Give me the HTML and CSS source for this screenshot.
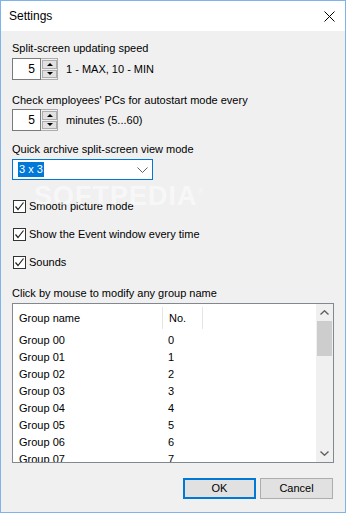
FILE: index.html
```html
<!DOCTYPE html>
<html lang="en">
<head>
<meta charset="UTF-8">
<title>Settings</title>
<link rel="stylesheet" href="styles.css">
</head>
<body>
<div class="window">
    <div class="titlebar">
        <span class="title">Settings</span>
        <svg class="close" width="11" height="11" viewBox="0 0 11 11">
            <path d="M0.5 0.5 L10.5 10.5 M10.5 0.5 L0.5 10.5" stroke="#000" stroke-width="1" fill="none"/>
        </svg>
    </div>

    <div class="content">
        <div class="label first">Split-screen updating speed</div>
        <div class="spin-row">
            <div class="spin">
                <div class="spin-value">5</div>
                <div class="spin-buttons">
                    <div class="spin-btn"><span class="arrow-up"></span></div>
                    <div class="spin-btn"><span class="arrow-down"></span></div>
                </div>
            </div>
            <span class="spin-note">1 - MAX, 10 - MIN</span>
        </div>

        <div class="label">Check employees' PCs for autostart mode every</div>
        <div class="spin-row tight">
            <div class="spin">
                <div class="spin-value">5</div>
                <div class="spin-buttons">
                    <div class="spin-btn"><span class="arrow-up"></span></div>
                    <div class="spin-btn"><span class="arrow-down"></span></div>
                </div>
            </div>
            <span class="spin-note">minutes (5...60)</span>
        </div>

        <div class="label archive">Quick archive split-screen view mode</div>
        <div class="combo">
            <span class="combo-value">3 x 3</span>
            <svg width="11" height="6" viewBox="0 0 11 6">
                <path d="M0.5 0.5 L5.5 5.5 L10.5 0.5" stroke="#606060" stroke-width="1" fill="none"/>
            </svg>
        </div>

        <div class="checks">
            <label class="check"><span class="box">
                <svg width="11" height="11" viewBox="0 0 11 11"><path d="M1.5 5.5 L4 8.5 L9.5 1.5" stroke="#222" stroke-width="1.2" fill="none"/></svg>
            </span>Smooth picture mode</label>
            <label class="check"><span class="box">
                <svg width="11" height="11" viewBox="0 0 11 11"><path d="M1.5 5.5 L4 8.5 L9.5 1.5" stroke="#222" stroke-width="1.2" fill="none"/></svg>
            </span>Show the Event window every time</label>
            <label class="check"><span class="box">
                <svg width="11" height="11" viewBox="0 0 11 11"><path d="M1.5 5.5 L4 8.5 L9.5 1.5" stroke="#222" stroke-width="1.2" fill="none"/></svg>
            </span>Sounds</label>
        </div>

        <div class="label groups">Click by mouse to modify any group name</div>
        <div class="list">
            <div class="list-body">
                <div class="list-head">
                    <div class="col-name">Group name</div>
                    <div class="col-no">No.</div>
                </div>
                <div class="row"><span class="col-name">Group 00</span><span class="col-no">0</span></div>
                <div class="row"><span class="col-name">Group 01</span><span class="col-no">1</span></div>
                <div class="row"><span class="col-name">Group 02</span><span class="col-no">2</span></div>
                <div class="row"><span class="col-name">Group 03</span><span class="col-no">3</span></div>
                <div class="row"><span class="col-name">Group 04</span><span class="col-no">4</span></div>
                <div class="row"><span class="col-name">Group 05</span><span class="col-no">5</span></div>
                <div class="row"><span class="col-name">Group 06</span><span class="col-no">6</span></div>
                <div class="row"><span class="col-name">Group 07</span><span class="col-no">7</span></div>
            </div>
            <div class="scrollbar">
                <div class="sb-arrow">
                    <svg width="9" height="5" viewBox="0 0 9 5"><path d="M0.5 4.5 L4.5 0.8 L8.5 4.5" stroke="#606060" stroke-width="1.4" fill="none"/></svg>
                </div>
                <div class="sb-thumb"></div>
                <div class="sb-track"></div>
                <div class="sb-arrow">
                    <svg width="9" height="5" viewBox="0 0 9 5"><path d="M0.5 0.5 L4.5 4.2 L8.5 0.5" stroke="#606060" stroke-width="1.4" fill="none"/></svg>
                </div>
            </div>
        </div>

        <div class="buttons">
            <div class="btn default">OK</div>
            <div class="btn">Cancel</div>
        </div>
    </div>

    <!-- watermark over the dialog -->
    <div class="watermark">SOFTPEDIA<sup>&reg;</sup></div>
</div>
</body>
</html>
```

FILE: styles.css
```css
body {
    margin: 0;
    font-family: "Liberation Sans", Arial, sans-serif;
    font-size: 11px;
    color: #000;
}
.window {
    position: relative;
    width: 346px;
    height: 513px;
    box-sizing: border-box;
    border: 1px solid #7eb4ea;
    background: #f0f0f0;
    display: flex;
    flex-direction: column;
    overflow: hidden;
}
.titlebar {
    height: 30px;
    flex: none;
    background: #fff;
    display: flex;
    align-items: center;
    justify-content: space-between;
    padding: 0 10px 0 8px;
}
.title {
    font-size: 12px;
}
.content {
    padding: 9px 11px 0 11px;
    display: flex;
    flex-direction: column;
}
.label {
    line-height: 16px;
    margin-top: 12px;
}
.label.first {
    margin-top: 0;
}
.label.archive {
    margin-top: 10px;
}
.spin-row {
    display: flex;
    align-items: center;
    margin-top: 2px;
}
.spin-row.tight {
    margin-top: 1px;
}
.spin {
    display: flex;
    height: 22px;
}
.spin-value {
    width: 29px;
    box-sizing: border-box;
    border: 1px solid #7a7a7a;
    background: #fff;
    text-align: right;
    padding-right: 5px;
    line-height: 20px;
    font-size: 12px;
}
.spin-buttons {
    width: 17px;
    display: flex;
    flex-direction: column;
    gap: 1px;
    padding: 1px 0 1px 1px;
    box-sizing: border-box;
    border: 1px solid #adadad;
    border-left: none;
    background: #f0f0f0;
}
.spin-btn {
    flex: 1;
    border: 1px solid #adadad;
    background: #e1e1e1;
    display: flex;
    align-items: center;
    justify-content: center;
}
.arrow-up {
    border-left: 3px solid transparent;
    border-right: 3px solid transparent;
    border-bottom: 3px solid #000;
}
.arrow-down {
    border-left: 3px solid transparent;
    border-right: 3px solid transparent;
    border-top: 3px solid #000;
}
.spin-note {
    margin-left: 8px;
}
.combo {
    margin-top: 2px;
    width: 141px;
    height: 21px;
    box-sizing: border-box;
    border: 1px solid #0078d7;
    background: #fff;
    display: flex;
    align-items: center;
    justify-content: space-between;
    padding: 0 4px 0 5px;
}
.combo-value {
    background: #0078d7;
    color: #fff;
    padding: 0 1px;
    line-height: 15px;
}
.checks {
    margin-top: 18px;
    display: flex;
    flex-direction: column;
    gap: 12px;
}
.check {
    display: flex;
    align-items: center;
    height: 16px;
    margin-left: 1px;
}
.box {
    width: 13px;
    height: 13px;
    box-sizing: border-box;
    border: 1px solid #333;
    background: #fff;
    display: flex;
    align-items: center;
    justify-content: center;
    margin-right: 3px;
}
.label.groups {
    margin-top: 15px;
}
.list {
    margin-top: 2px;
    height: 160px;
    box-sizing: border-box;
    border: 1px solid #828790;
    background: #fff;
    display: flex;
}
.list-body {
    flex: 1;
    overflow: hidden;
}
.list-head {
    display: flex;
    height: 28px;
    align-items: center;
}
.list-head .col-name {
    border-right: 1px solid #e5e5e5;
    height: 22px;
    line-height: 22px;
}
.list-head .col-no {
    border-right: 1px solid #e5e5e5;
    width: 33px;
    height: 22px;
    line-height: 22px;
}
.col-name {
    width: 143px;
    padding-left: 6px;
}
.col-no {
    padding-left: 6px;
}
.row {
    display: flex;
    height: 17px;
    line-height: 17px;
}
.scrollbar {
    width: 17px;
    background: #f0f0f0;
    display: flex;
    flex-direction: column;
}
.sb-arrow {
    height: 17px;
    display: flex;
    align-items: center;
    justify-content: center;
}
.sb-thumb {
    height: 35px;
    margin: 0 1px;
    background: #cdcdcd;
}
.sb-track {
    flex: 1;
}
.buttons {
    margin-top: 15px;
    display: flex;
    justify-content: flex-end;
    gap: 4px;
    padding-right: 1px;
}
.btn {
    width: 73px;
    height: 21px;
    box-sizing: border-box;
    border: 1px solid #adadad;
    background: #e1e1e1;
    text-align: center;
    line-height: 19px;
}
.btn.default {
    border: 2px solid #0078d7;
    line-height: 17px;
}
.watermark {
    position: absolute;
    left: 33px;
    top: 180px;
    font-size: 27px;
    font-weight: bold;
    letter-spacing: 1px;
    color: rgba(255, 255, 255, 0.5);
    pointer-events: none;
}
.watermark sup {
    font-size: 9px;
    font-weight: normal;
}
```
